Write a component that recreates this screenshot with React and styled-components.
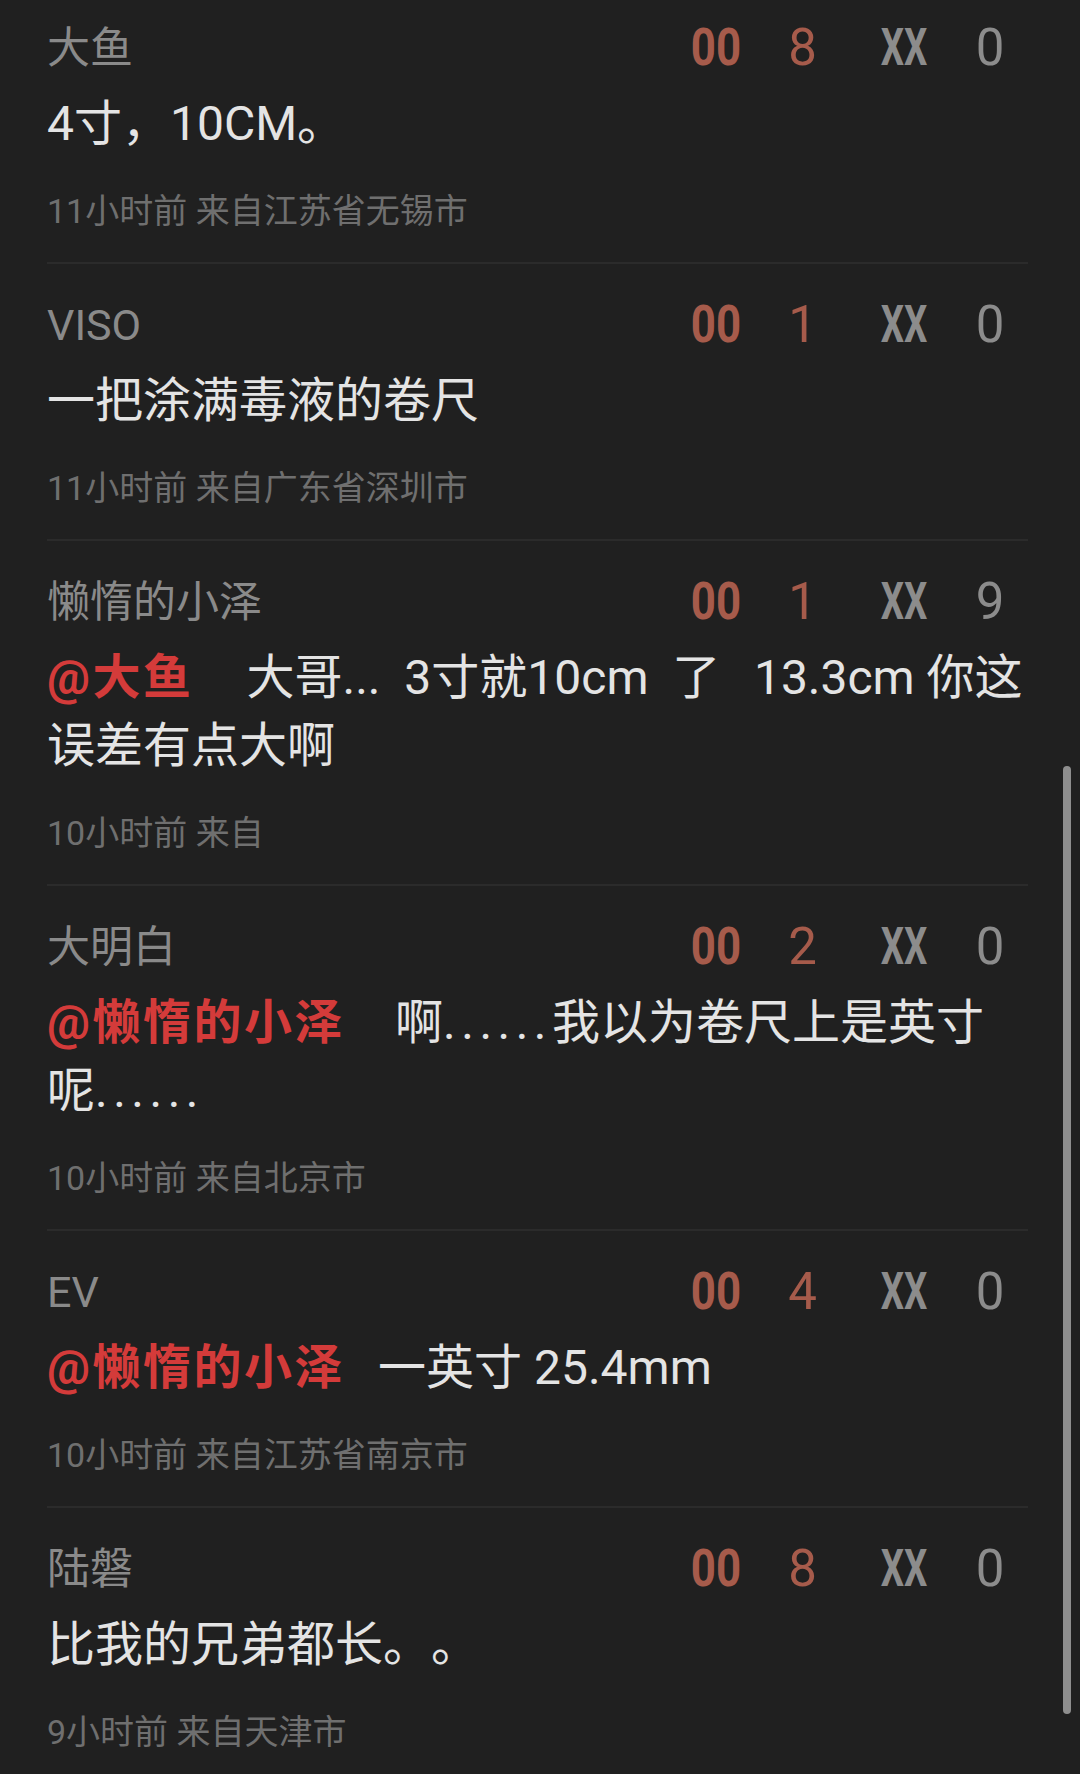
import React from 'react';
import styled, { createGlobalStyle } from 'styled-components';

const GlobalStyle = createGlobalStyle`
  html, body {
    margin: 0;
    padding: 0;
    background: #202020;
  }
  body {
    font-family: Roboto, "Noto Sans CJK SC", sans-serif;
    text-spacing-trim: space-all;
  }
`;

const Screen = styled.div`
  position: relative;
  height: 1774px;
  overflow: hidden;
  background: #202020;
`;

const List = styled.div`
  padding: 0 52px 0 47px;
`;

const Item = styled.div`
  padding: 33px 0 27px;
  border-bottom: 2px solid #2b2b2b;

  &:first-child {
    padding-top: 20px;
  }
`;

const Header = styled.div`
  display: flex;
  align-items: center;
  justify-content: space-between;
  height: 56px;
`;

const Name = styled.div`
  font-size: 43px;
  color: #8a8a8a;
  line-height: 56px;
`;

const Stats = styled.div`
  display: flex;
  align-items: center;
  gap: 67px;
  padding-right: 26px;
`;

const StatPair = styled.div`
  display: flex;
  align-items: center;
  gap: 51px;
`;

const Icon = styled.span`
  display: inline-flex;
  justify-content: center;
  width: ${p => p.$w}px;
  font-family: Roboto, sans-serif;
  font-weight: 700;
  font-size: 51px;
  line-height: 56px;
  color: ${p => p.$color};
  transform: scaleX(${p => p.$sx});
`;

const Count = styled.span`
  display: inline-flex;
  justify-content: center;
  width: ${p => p.$w}px;
  font-family: Roboto, sans-serif;
  font-size: 51px;
  line-height: 56px;
  color: ${p => p.$color};
`;

const Content = styled.div`
  margin-top: 14px;
  font-size: 48px;
  line-height: 68px;
  color: #e4e4e4;
`;

const Mention = styled.span`
  color: #d43b3a;
  font-weight: 700;
  letter-spacing: 2.5px;
  margin-right: ${p => p.$space}px;
`;

// baseline dots, spaced out like a full-width ellipsis
const Dots = styled.span`
  letter-spacing: 5.5px;
`;

const Meta = styled.div`
  margin-top: 29px;
  font-size: 34px;
  line-height: 48px;
  color: #6f6f6f;
`;

const ScrollThumb = styled.div`
  position: absolute;
  right: 9px;
  top: 766px;
  width: 8px;
  height: 948px;
  border-radius: 4px;
  background: #8e8e8e;
`;

const comments = [
  { name: '大鱼', like: 8, dislike: 0, text: '4寸，10CM。', meta: '11小时前 来自江苏省无锡市' },
  { name: 'VISO', like: 1, dislike: 0, text: '一把涂满毒液的卷尺', meta: '11小时前 来自广东省深圳市' },
  {
    name: '懒惰的小泽', like: 1, dislike: 9, reply: '大鱼', space: 53,
    text: '大哥...\u00a0 3寸就10cm\u00a0 了\u00a0\u2009 13.3cm 你这误差有点大啊', meta: '10小时前 来自',
  },
  {
    name: '大明白', like: 2, dislike: 0, reply: '懒惰的小泽', space: 50,
    text: <>啊<Dots>......</Dots>我以为卷尺上是英寸呢<Dots>......</Dots></>, meta: '10小时前 来自北京市',
  },
  {
    name: 'EV', like: 4, dislike: 0, reply: '懒惰的小泽', space: 33,
    text: '一英寸 25.4mm', meta: '10小时前 来自江苏省南京市',
  },
  { name: '陆磐', like: 8, dislike: 0, text: '比我的兄弟都长。。', meta: '9小时前 来自天津市' },
];

const Comment = ({ c }) => (
  <Item>
    <Header>
      <Name>{c.name}</Name>
      <Stats>
        <StatPair>
          <Icon $w={48} $sx={0.86} $color="#a65b4b">00</Icon>
          <Count $w={23} $color="#a65b4b">{c.like}</Count>
        </StatPair>
        <StatPair>
          <Icon $w={46} $sx={0.72} $color="#8c8c8c">XX</Icon>
          <Count $w={24} $color="#8c8c8c">{c.dislike}</Count>
        </StatPair>
      </Stats>
    </Header>
    <Content>
      {c.reply && <Mention $space={c.space}>@{c.reply}</Mention>}
      {c.text}
    </Content>
    <Meta>{c.meta}</Meta>
  </Item>
);

const App = () => (
  <Screen>
    <GlobalStyle />
    <List>
      {comments.map((c, i) => <Comment key={i} c={c} />)}
    </List>
    <ScrollThumb />
  </Screen>
);

export default App;
